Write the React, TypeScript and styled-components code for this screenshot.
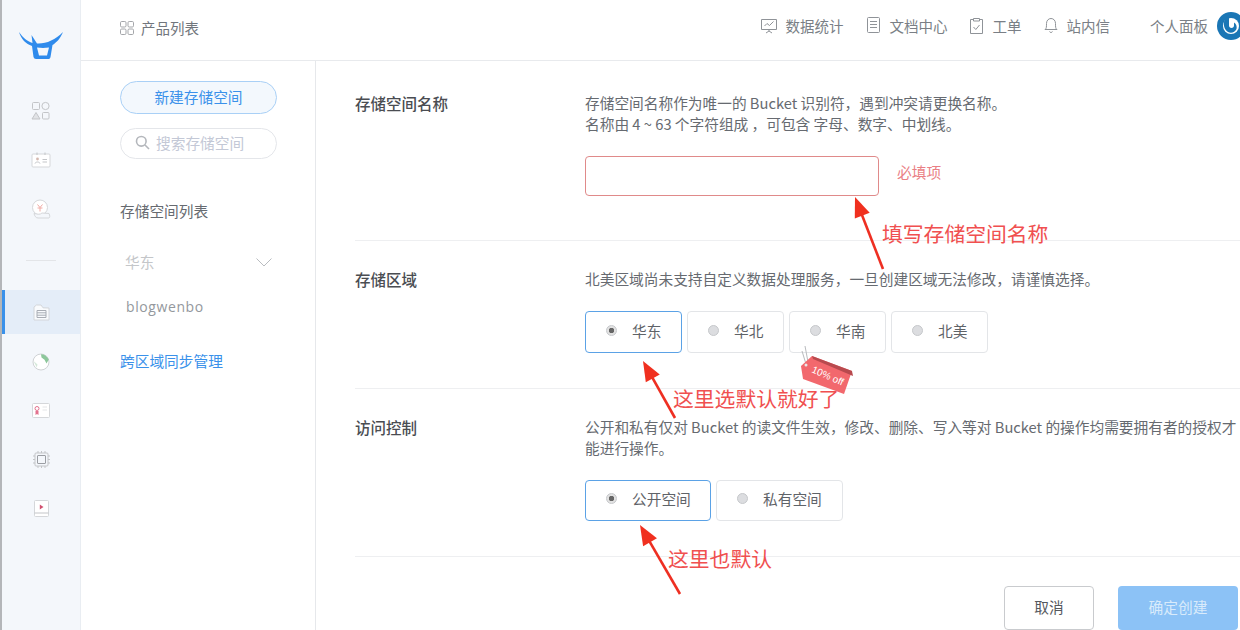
import React from "react";
import styled, { createGlobalStyle } from "styled-components";

const BLUE = "#3a91ea";
const FONT = `"Noto Sans CJK SC", "Noto Sans", sans-serif`;

const GlobalStyle = createGlobalStyle`
  html, body {
    margin: 0;
    padding: 0;
    background: #fff;
  }
  body {
    font-family: ${FONT};
    overflow: hidden;
  }
  * {
    box-sizing: border-box;
  }
`;

const Page = styled.div`
  position: relative;
  display: flex;
  width: 1240px;
  height: 630px;
  overflow: hidden;
  border-left: 2px solid #b4b6b9;
`;

const Rail = styled.aside`
  width: 79px;
  flex: none;
  display: flex;
  flex-direction: column;
  background: #f4f7fb;
  border-right: 1px solid #e9edf2;
`;

const RailLogo = styled.div`
  height: 86px;
  padding: 31px 0 0 16px;
  svg {
    display: block;
  }
`;

const RailItem = styled.div<{ $active?: boolean }>`
  height: 49px;
  display: flex;
  align-items: center;
  justify-content: center;
  ${(p) =>
    p.$active &&
    `
    height: 44px;
    margin-bottom: 3px;
    background: #e4edf8;
    box-shadow: inset 3px 0 0 ${BLUE};
  `}
`;

const RailDivider = styled.div`
  width: 30px;
  height: 1px;
  margin: 27px auto 29px;
  background: #e3e5e8;
`;

const Body = styled.div`
  flex: 1;
  min-width: 0;
  display: flex;
  flex-direction: column;
`;

const Header = styled.header`
  height: 61px;
  flex: none;
  display: flex;
  align-items: center;
  padding: 0 0 9px 39px;
  border-bottom: 1px solid #e8eaed;
`;

const ProductLink = styled.div`
  display: flex;
  align-items: center;
  gap: 7px;
  margin-top: 4px;
  font-size: 14.5px;
  color: #71767d;
`;

const HeaderNav = styled.nav`
  display: flex;
  align-items: center;
  margin-left: auto;
`;

const NavItem = styled.div<{ $gap?: number }>`
  display: flex;
  align-items: center;
  gap: 9px;
  margin-right: ${(p) => p.$gap ?? 21}px;
  font-size: 14.5px;
  color: #7a7f86;
  white-space: nowrap;
`;

const Avatar = styled.div`
  width: 24px;
  height: 28px;
  flex: none;
  margin-left: -13px;
  svg {
    display: block;
  }
`;

const Columns = styled.div`
  flex: 1;
  display: flex;
  min-height: 0;
`;

const SubNav = styled.aside`
  width: 235px;
  flex: none;
  padding: 20px 0 0 39px;
  border-right: 1px solid #e6e8eb;
`;

const NewButton = styled.div`
  width: 157px;
  height: 33px;
  padding-bottom: 3px;
  display: flex;
  align-items: center;
  justify-content: center;
  border: 1px solid #a9d0f6;
  border-radius: 17px;
  background: #f3f8fd;
  color: ${BLUE};
  font-size: 14.7px;
`;

const SearchBox = styled.div`
  width: 157px;
  height: 31px;
  margin-top: 14px;
  padding: 0 0 2px 14px;
  display: flex;
  align-items: center;
  gap: 6px;
  border: 1px solid #e4e6ea;
  border-radius: 16px;
  color: #c3c8d6;
  font-size: 14.7px;
`;

const ListTitle = styled.div`
  margin-top: 42px;
  font-size: 14.7px;
  line-height: 20px;
  color: #666a70;
`;

const RegionRow = styled.div`
  width: 152px;
  margin-top: 31px;
  padding-left: 5px;
  display: flex;
  align-items: center;
  justify-content: space-between;
  font-size: 14.7px;
  line-height: 20px;
  color: #c4c6c9;
`;

const BucketName = styled.div`
  margin-top: 25px;
  padding-left: 6px;
  font-family: "Open Sans", sans-serif;
  font-size: 14px;
  font-weight: 400;
  line-height: 20px;
  letter-spacing: 0.6px;
  color: #94989d;
`;

const SyncLink = styled.div`
  margin-top: 34px;
  font-size: 14.7px;
  line-height: 20px;
  color: ${BLUE};
`;

const Main = styled.main`
  flex: 1;
  min-width: 0;
  padding-left: 39px;
`;

const Section = styled.section<{ $height: number; $top: number }>`
  height: ${(p) => p.$height}px;
  padding-top: ${(p) => p.$top}px;
  display: flex;
  border-bottom: 1px solid #eeeff1;
`;

const FieldLabel = styled.div`
  width: 230px;
  flex: none;
  font-size: 15.5px;
  font-weight: 500;
  line-height: 21px;
  color: #4a4d52;
`;

const FieldBody = styled.div`
  flex: 1;
  min-width: 0;
`;

const Description = styled.p`
  margin: -1px 0 0;
  width: 655px;
  font-size: 14.7px;
  line-height: 21px;
  color: #666a70;
`;

const InputRow = styled.div`
  margin-top: 22px;
  display: flex;
  align-items: center;
  gap: 18px;
`;

const NameInput = styled.div`
  width: 294px;
  height: 40px;
  border: 1px solid #e08a8a;
  border-radius: 4px;
  background: #fff;
`;

const Hint = styled.span`
  padding-bottom: 9px;
  font-size: 14.7px;
  color: #ea7f85;
`;

const Options = styled.div`
  margin-top: 22px;
  display: flex;
  gap: 5px;
`;

const Option = styled.div<{ $width: number; $height: number; $selected?: boolean }>`
  width: ${(p) => p.$width}px;
  height: ${(p) => p.$height}px;
  padding: 0 0 4px 20px;
  display: flex;
  align-items: center;
  gap: 15px;
  border: 1px solid ${(p) => (p.$selected ? "#5ba2e6" : "#e3e5e8")};
  border-radius: 4px;
  background: #fff;
  font-size: 14.7px;
  color: #5f6368;
`;

const Radio = styled.span<{ $checked?: boolean }>`
  width: 11px;
  height: 11px;
  flex: none;
  border-radius: 50%;
  border: 1px solid #c6c8cb;
  background: ${(p) =>
    p.$checked
      ? "radial-gradient(circle, #666 0 2.5px, #e2e2e2 3px)"
      : "#dcdde0"};
`;

const Footer = styled.footer`
  display: flex;
  justify-content: flex-end;
  gap: 24px;
  padding: 29px 2px 0 0;
`;

const CancelButton = styled.div`
  width: 90px;
  height: 44px;
  padding-bottom: 4px;
  display: flex;
  align-items: center;
  justify-content: center;
  border: 1px solid #c9cbce;
  border-radius: 4px;
  font-size: 14.7px;
  color: #55585d;
`;

const ConfirmButton = styled.div`
  width: 120px;
  height: 44px;
  padding-bottom: 4px;
  display: flex;
  align-items: center;
  justify-content: center;
  border-radius: 4px;
  background: #8cc2f6;
  font-size: 14.7px;
  color: #d9ebfb;
`;

/* the red notes drawn over the screenshot */
const Note = styled.span<{ $x: number; $y: number }>`
  position: absolute;
  left: ${(p) => p.$x}px;
  top: ${(p) => p.$y}px;
  font-size: 20.8px;
  line-height: 28px;
  color: #f05050;
  white-space: nowrap;
`;

const ArrowLayer = styled.svg`
  position: absolute;
  left: -2px;
  top: 0;
  pointer-events: none;
`;

const TagText = styled.text`
  font-family: "Liberation Sans", sans-serif;
  font-size: 10px;
  fill: #fff;
`;

const Ln = { fill: "none", stroke: "#c3c5c8", strokeWidth: 1 };

const Logo = () => (
  <svg width="46" height="30" viewBox="0 0 46 30">
    <path
      d="M1 1C5 7 9 10 14.500 12L13.500 4L19 12.500C28 13 37 9 45 1C42 8 38 12 34.500 14L32.500 26C32 28 31 28 30 28H18C16.500 28 16 27 15.500 26L14 15C8 13 3 8 1 1Z"
      fill="#2f8bec"
    />
    <path d="M19 16.500C23 17 27 17 31 16.500L29 24.500H21Z" fill="#f4f7fb" />
  </svg>
);

const AppsIcon = () => (
  <svg width="14" height="14" viewBox="0 0 14 14" fill="none" stroke="#a4a6aa">
    <rect x=".5" y=".5" width="5.500" height="5.500" rx="1.200" />
    <rect x="8" y=".5" width="5.500" height="5.500" rx="1.200" />
    <rect x=".5" y="8" width="5.500" height="5.500" rx="1.200" />
    <rect x="8" y="8" width="5.500" height="5.500" rx="1.200" />
  </svg>
);

const ShapesIcon = () => (
  <svg width="20" height="20" viewBox="0 0 20 20" {...Ln}>
    <rect x="1.500" y="1.500" width="7" height="7" rx="1" />
    <circle cx="14.500" cy="5" r="3.600" />
    <path d="M5 11.500L9 18H1Z" fill="#e1e3e6" />
    <rect x="11.500" y="11.500" width="6.500" height="6.500" rx="1" />
  </svg>
);

const CardIcon = () => (
  <svg width="20" height="16" viewBox="0 0 20 16" {...Ln}>
    <rect x="1" y="2" width="18" height="13" rx="1" fill="#fff" stroke="#d5d7da" />
    <path d="M6 .5V3M14 .5V3" />
    <circle cx="6.500" cy="7" r="1.400" fill="#d4b9b0" stroke="none" />
    <path d="M4 11.500C4.500 9.500 8.500 9.500 9 11.500M11.500 7.500H16M11.500 10H16" />
  </svg>
);

const CoinIcon = () => (
  <svg width="20" height="20" viewBox="0 0 20 20" {...Ln}>
    <circle cx="9" cy="8.500" r="7.500" fill="#fff" stroke="#d5d7da" />
    <path d="M6.500 5.500L9 8.500L11.500 5.500M6.500 9H11.500M9 8.500V12.500" stroke="#f0aaa4" />
    <path d="M3 14.500C6 15 9 16 11 14L18 14.500C19 16.500 19 18.500 18 19H7C5 19 3.500 17 3 14.500Z" fill="#f4f7fb" stroke="#d5d7da" />
  </svg>
);

const BucketIcon = () => (
  <svg width="17" height="17" viewBox="0 0 17 17" {...Ln}>
    <path d="M1 4V16H16V4L10 3.800L8 1H3.500L1 3Z" fill="#f9fbfd" stroke="#d3d6da" />
    <path d="M4 6.500H13V13.500H4ZM4 8.800H13M4 11.200H13" stroke="#a9adb4" />
  </svg>
);

const GlobeIcon = () => (
  <svg width="18" height="18" viewBox="0 0 18 18" {...Ln}>
    <circle cx="9" cy="9" r="8" fill="#fff" stroke="#cfd2d5" />
    <path d="M9 1.200C12 1.200 15 3 16.800 6.500L14.500 10.500L12.500 6.800L9.500 4.500Z" fill="#8cc79b" stroke="none" />
    <path d="M1.500 8L5.500 11.500L4.800 14.500Z" fill="#d4e8d9" stroke="none" />
  </svg>
);

const CertIcon = () => (
  <svg width="18" height="15" viewBox="0 0 18 15" {...Ln}>
    <rect x=".5" y=".5" width="17" height="14" rx="1" fill="#fff" stroke="#d5d7da" />
    <circle cx="5" cy="5.500" r="2" stroke="#e2718e" />
    <path d="M3.500 8H6.500V12L5 11L3.500 12Z" fill="#e2718e" stroke="none" />
    <path d="M10.500 4H15M10.500 7H15" stroke="#e4e5e7" />
  </svg>
);

const ChipIcon = () => (
  <svg width="17" height="17" viewBox="0 0 17 17" {...Ln}>
    <rect x="2" y="2" width="13" height="13" rx="1" />
    <rect x="4.500" y="4.500" width="8" height="8" rx=".5" stroke="#9b9ea3" />
    <path d="M0 5H2M0 8.500H2M0 12H2M15 5H17M15 8.500H17M15 12H17M5 0V2M8.500 0V2M12 0V2M5 15V17M8.500 15V17M12 15V17" />
  </svg>
);

const VideoIcon = () => (
  <svg width="15" height="17" viewBox="0 0 15 17" {...Ln}>
    <rect x=".5" y=".5" width="14" height="16" rx="1" fill="#fff" stroke="#d5d7da" />
    <path d="M5.800 4.500L9.500 7L5.800 9.500Z" fill="#d1506f" stroke="none" />
    <path d="M.5 13H14.500" />
  </svg>
);

const SearchIcon = () => (
  <svg width="15" height="15" viewBox="0 0 15 15" fill="none" stroke="#b4b7bc" strokeWidth="1.600">
    <circle cx="6.300" cy="6.300" r="4.800" />
    <path d="M10 10L14 14" />
  </svg>
);

const Chevron = () => (
  <svg width="16" height="9" viewBox="0 0 16 9" fill="none" stroke="#b9bcc0">
    <path d="M.5.500L8 8L15.500.500" />
  </svg>
);

const navStroke = { fill: "none", stroke: "#8f9398", strokeWidth: 1 };

const StatsIcon = () => (
  <svg width="16" height="16" viewBox="0 0 16 16" {...navStroke}>
    <path d="M.5 1.500H15.500V11.500H.5ZM3.500 8L6 5.500L8.500 7.500L12.500 3.500M8 11.500V13M5 15L8 13L11 15" />
  </svg>
);

const DocIcon = () => (
  <svg width="15" height="17" viewBox="0 0 15 17" {...navStroke}>
    <rect x="1.500" y=".5" width="12" height="15" rx="1" />
    <path d="M4 4.500H11M4 7.500H11M4 10.500H11" />
  </svg>
);

const TicketIcon = () => (
  <svg width="15" height="18" viewBox="0 0 15 18" {...navStroke}>
    <path d="M4.500 2.500H1.500V16.500H13.500V2.500H10.500M4.500 1.500H10.500V4H4.500ZM4.500 10L6.800 12.500L10.500 8" />
  </svg>
);

const BellIcon = () => (
  <svg width="14" height="17" viewBox="0 0 14 17" {...navStroke}>
    <path d="M1 12.500C2.500 11.500 2.500 10 2.500 6.500C2.500 3.500 4.500 1.500 7 1.500C9.500 1.500 11.500 3.500 11.500 6.500C11.500 10 11.500 11.500 13 12.500ZM5.500 14.500C6 15.800 8 15.800 8.500 14.500" />
  </svg>
);

const PowerAvatar = () => (
  <svg width="29" height="28" viewBox="0 0 29 28">
    <circle cx="15" cy="14" r="14" fill="#1a76b5" />
    <circle cx="15" cy="14" r="8" fill="#fff" />
    <path d="M8 11C8 7 11 5 13 5V13.500C13 15 14 16 15.500 16C17 16 18 15 18 13.500V10.500C20.500 12 21 15 20.500 17C19 20.500 15 21.500 12 20C9.500 18.500 7.500 15 8 11Z" fill="#1a76b5" />
  </svg>
);

const Arrow = ({ x1, y1, x2, y2 }: { x1: number; y1: number; x2: number; y2: number }) => {
  const a = Math.atan2(y2 - y1, x2 - x1);
  const pt = (len: number, off: number) => {
    const x = x2 - Math.cos(a) * len - Math.sin(a) * off;
    const y = y2 - Math.sin(a) * len + Math.cos(a) * off;
    return `${x},${y}`;
  };
  return (
    <g>
      <path d={`M${x1} ${y1}L${x2 - Math.cos(a) * 12} ${y2 - Math.sin(a) * 12}`} stroke="#ee2f22" strokeWidth="2.600" />
      <polygon points={`${x2},${y2} ${pt(20, 8)} ${pt(20, -8)}`} fill="#f0301f" />
    </g>
  );
};

const Annotations = () => (
  <ArrowLayer width="1240" height="630" viewBox="0 0 1240 630">
    <Arrow x1={883} y1={269} x2={855} y2={197} />
    <Arrow x1={675} y1={418} x2={643} y2={361} />
    <Arrow x1={680} y1={594} x2={640} y2={525} />
    <path d="M805 346L808 362M802 351L806 364" stroke="#b9bbbe" strokeWidth="1" fill="none" />
    <polygon points="812,356 852,371 844,394 803,379 801,366" fill="#f2686d" />
    <polygon points="812,356 852,371 853,376 813,359" fill="#b84a4e" />
    <circle cx="806" cy="365" r="1.500" fill="#e8e8e8" />
    <TagText x="811" y="372" transform="rotate(24 811 372)">10% off</TagText>
  </ArrowLayer>
);

const railIcons = [<ShapesIcon />, <CardIcon />, <CoinIcon />];
const railIconsBelow = [<GlobeIcon />, <CertIcon />, <ChipIcon />, <VideoIcon />];

export default function App() {
  return (
    <>
      <GlobalStyle />
      <Page>
        <Rail>
          <RailLogo>
            <Logo />
          </RailLogo>
          {railIcons.map((icon, i) => (
            <RailItem key={i}>{icon}</RailItem>
          ))}
          <RailDivider />
          <RailItem $active>
            <BucketIcon />
          </RailItem>
          {railIconsBelow.map((icon, i) => (
            <RailItem key={i}>{icon}</RailItem>
          ))}
        </Rail>
        <Body>
          <Header>
            <ProductLink>
              <AppsIcon />
              产品列表
            </ProductLink>
            <HeaderNav>
              <NavItem $gap={22}>
                <StatsIcon />
                数据统计
              </NavItem>
              <NavItem>
                <DocIcon />
                文档中心
              </NavItem>
              <NavItem $gap={22}>
                <TicketIcon />
                工单
              </NavItem>
              <NavItem $gap={40}>
                <BellIcon />
                站内信
              </NavItem>
              <NavItem>个人面板</NavItem>
              <Avatar>
                <PowerAvatar />
              </Avatar>
            </HeaderNav>
          </Header>
          <Columns>
            <SubNav>
              <NewButton>新建存储空间</NewButton>
              <SearchBox>
                <SearchIcon />
                搜索存储空间
              </SearchBox>
              <ListTitle>存储空间列表</ListTitle>
              <RegionRow>
                华东
                <Chevron />
              </RegionRow>
              <BucketName>blogwenbo</BucketName>
              <SyncLink>跨区域同步管理</SyncLink>
            </SubNav>
            <Main>
              <Section $height={180} $top={32}>
                <FieldLabel>存储空间名称</FieldLabel>
                <FieldBody>
                  <Description>
                    存储空间名称作为唯一的 Bucket 识别符，遇到冲突请更换名称。
                    <br />
                    名称由 4 ~ 63 个字符组成 ，可包含 字母、数字、中划线。
                  </Description>
                  <InputRow>
                    <NameInput />
                    <Hint>必填项</Hint>
                  </InputRow>
                </FieldBody>
              </Section>
              <Section $height={148} $top={28}>
                <FieldLabel>存储区域</FieldLabel>
                <FieldBody>
                  <Description>
                    北美区域尚未支持自定义数据处理服务，一旦创建区域无法修改，请谨慎选择。
                  </Description>
                  <Options>
                    <Option $width={97} $height={42} $selected>
                      <Radio $checked />
                      华东
                    </Option>
                    <Option $width={97} $height={42}>
                      <Radio />
                      华北
                    </Option>
                    <Option $width={97} $height={42}>
                      <Radio />
                      华南
                    </Option>
                    <Option $width={97} $height={42}>
                      <Radio />
                      北美
                    </Option>
                  </Options>
                </FieldBody>
              </Section>
              <Section $height={168} $top={28}>
                <FieldLabel>访问控制</FieldLabel>
                <FieldBody>
                  <Description>
                    公开和私有仅对 Bucket 的读文件生效，修改、删除、写入等对 Bucket 的操作均需要拥有者的授权才能进行操作。
                  </Description>
                  <Options>
                    <Option $width={126} $height={41} $selected>
                      <Radio $checked />
                      公开空间
                    </Option>
                    <Option $width={127} $height={41}>
                      <Radio />
                      私有空间
                    </Option>
                  </Options>
                </FieldBody>
              </Section>
              <Footer>
                <CancelButton>取消</CancelButton>
                <ConfirmButton>确定创建</ConfirmButton>
              </Footer>
            </Main>
          </Columns>
        </Body>
        <Annotations />
        <Note $x={880} $y={219}>填写存储空间名称</Note>
        <Note $x={671} $y={384}>这里选默认就好了</Note>
        <Note $x={666} $y={544}>这里也默认</Note>
      </Page>
    </>
  );
}
